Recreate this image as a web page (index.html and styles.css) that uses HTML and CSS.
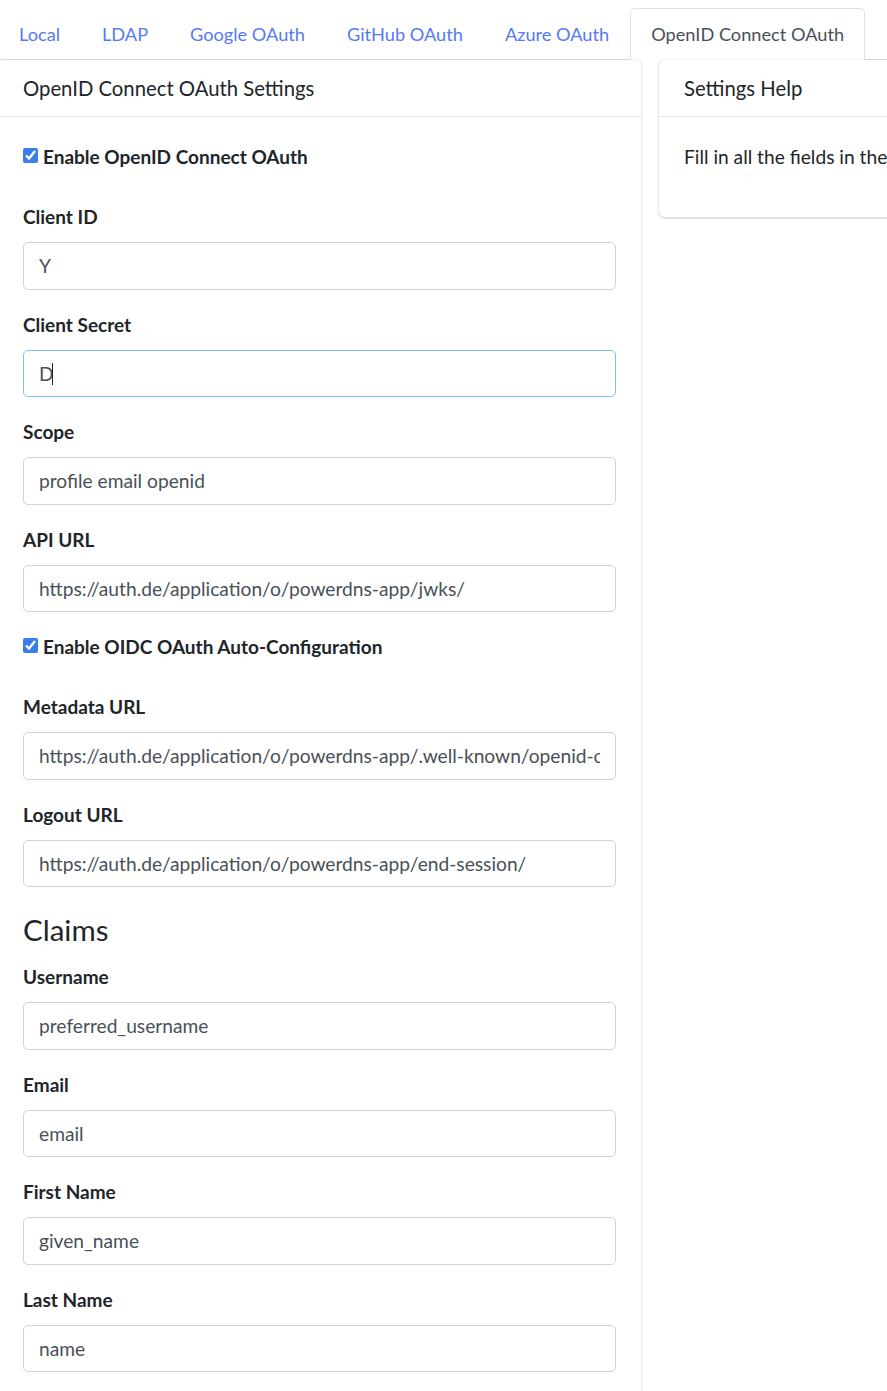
FILE: index.html
```html
<!DOCTYPE html>
<html lang="en">
<head>
    <meta charset="UTF-8">
    <meta name="viewport" content="width=device-width, initial-scale=1.0">
    <title>Authentication Settings</title>
    <link rel="stylesheet" href="styles.css">
</head>
<body>
    <div class="page">
        <ul class="nav-tabs">
            <li><a href="#" class="nav-link">Local</a></li>
            <li><a href="#" class="nav-link">LDAP</a></li>
            <li><a href="#" class="nav-link">Google OAuth</a></li>
            <li><a href="#" class="nav-link">GitHub OAuth</a></li>
            <li><a href="#" class="nav-link">Azure OAuth</a></li>
            <li><a href="#" class="nav-link active">OpenID Connect OAuth</a></li>
        </ul>

        <div class="row">
            <div class="card settings-card">
                <div class="card-header">
                    <h3 class="card-title">OpenID Connect OAuth Settings</h3>
                </div>
                <form class="card-body">
                    <div class="form-check">
                        <label><input type="checkbox" checked> Enable OpenID Connect OAuth</label>
                    </div>

                    <div class="form-group">
                        <label for="client_id">Client ID</label>
                        <input type="text" id="client_id" class="form-control" value="Y">
                    </div>

                    <div class="form-group">
                        <label for="client_secret">Client Secret</label>
                        <div class="input-wrap">
                            <input type="text" id="client_secret" class="form-control focused" value="D">
                            <span class="caret"></span>
                        </div>
                    </div>

                    <div class="form-group">
                        <label for="scope">Scope</label>
                        <input type="text" id="scope" class="form-control" value="profile email openid">
                    </div>

                    <div class="form-group">
                        <label for="api_url">API URL</label>
                        <input type="text" id="api_url" class="form-control" value="https://auth.de/application/o/powerdns-app/jwks/">
                    </div>

                    <div class="form-check">
                        <label><input type="checkbox" checked> Enable OIDC OAuth Auto-Configuration</label>
                    </div>

                    <div class="form-group">
                        <label for="metadata_url">Metadata URL</label>
                        <input type="text" id="metadata_url" class="form-control" value="https://auth.de/application/o/powerdns-app/.well-known/openid-configuration">
                    </div>

                    <div class="form-group">
                        <label for="logout_url">Logout URL</label>
                        <input type="text" id="logout_url" class="form-control" value="https://auth.de/application/o/powerdns-app/end-session/">
                    </div>

                    <h4>Claims</h4>

                    <div class="form-group">
                        <label for="username">Username</label>
                        <input type="text" id="username" class="form-control" value="preferred_username">
                    </div>

                    <div class="form-group">
                        <label for="email">Email</label>
                        <input type="text" id="email" class="form-control" value="email">
                    </div>

                    <div class="form-group">
                        <label for="firstname">First Name</label>
                        <input type="text" id="firstname" class="form-control" value="given_name">
                    </div>

                    <div class="form-group">
                        <label for="lastname">Last Name</label>
                        <input type="text" id="lastname" class="form-control" value="name">
                    </div>
                </form>
            </div>

            <div class="card help-card">
                <div class="card-header">
                    <h3 class="card-title">Settings Help</h3>
                </div>
                <div class="card-body">
                    <p>Fill in all the fields in the form to the left.</p>
                </div>
            </div>
        </div>
    </div>
</body>
</html>
```

FILE: styles.css
```css
* {
    margin: 0;
    padding: 0;
    box-sizing: border-box;
}

body {
    font-family: Lato, 'Noto Sans', sans-serif;
    font-size: 19px;
    line-height: 30px;
    color: #212529;
    background-color: #fff;
    overflow: hidden;
}

.page {
    margin: 8px 0 0 -2px;
    width: 1300px;
}

.nav-tabs {
    list-style: none;
    display: flex;
    border-bottom: 1px solid #dee2e6;
}

.nav-tabs li {
    margin-bottom: -1px;
}

.nav-link {
    display: block;
    padding: 10px 20px;
    font-size: 18.2px;
    border: 1px solid transparent;
    border-radius: 5px 5px 0 0;
    color: #5679f5;
    text-decoration: none;
}

.nav-link.active {
    color: #495057;
    background-color: #fff;
    border-color: #dee2e6 #dee2e6 #fff;
}

.row {
    display: flex;
    align-items: flex-start;
    gap: 18px;
}

.card {
    background-color: #fff;
    border-radius: 5px;
    box-shadow: 0 0 1px rgba(0, 0, 0, 0.125), 0 1px 3px rgba(0, 0, 0, 0.2);
}

.settings-card {
    width: 643px;
    flex-shrink: 0;
}

.help-card {
    width: 600px;
}

.card-header {
    padding: 15px 25px;
    border-bottom: 1px solid #e3e5e8;
}

.card-title {
    font-size: 20.3px;
    font-weight: 400;
    line-height: 26px;
}

.card-body {
    padding: 25px;
}

.help-card .card-body {
    white-space: nowrap;
}

.help-card p {
    font-size: 19.2px;
    margin-bottom: 20px;
}

.form-check {
    margin-bottom: 30px;
}

.form-check label {
    font-weight: 700;
    display: flex;
    align-items: center;
    gap: 5px;
}

.form-check input {
    width: 15px;
    height: 15px;
    accent-color: #3b7ded;
    margin-top: -3px;
}

.form-group {
    margin-bottom: 20px;
}

.form-group label {
    display: block;
    font-weight: 700;
    margin-bottom: 10px;
}

.form-control {
    display: block;
    width: 100%;
    height: 47.5px;
    padding: 7.5px 15px;
    font-family: inherit;
    font-size: 19.2px;
    color: #495057;
    border: 1px solid #ced4da;
    border-radius: 5px;
    outline: none;
}

.form-control.focused {
    border-color: #80bdff;
    caret-color: transparent;
}

.input-wrap {
    position: relative;
}

.caret {
    position: absolute;
    left: 29px;
    top: 13px;
    width: 1px;
    height: 22px;
    background-color: #212529;
}

h4 {
    font-size: 29.5px;
    font-weight: 400;
    line-height: 36px;
    margin: 25px 0 14px;
}
```
